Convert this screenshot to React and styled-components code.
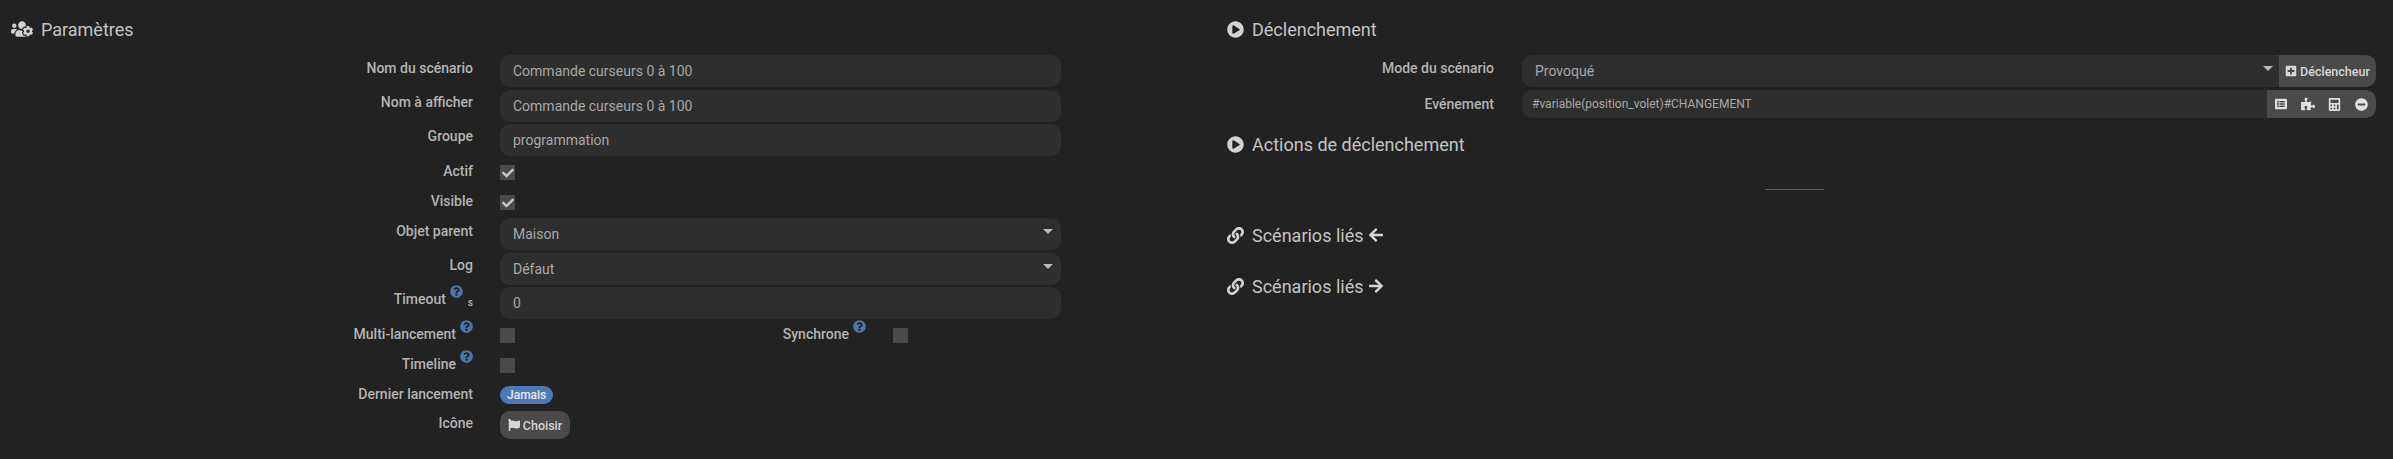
import styled, { createGlobalStyle } from "styled-components";
import {
  FaUsersCog,
  FaPlayCircle,
  FaLink,
  FaArrowLeft,
  FaArrowRight,
  FaPlusSquare,
  FaFlag,
  FaQuestionCircle,
  FaListAlt,
  FaPuzzlePiece,
  FaCalculator,
  FaMinusCircle,
  FaCheck,
} from "react-icons/fa";

const GlobalStyle = createGlobalStyle`
  html, body {
    margin: 0;
    background: #222222;
    height: 100%;
  }
  body {
    font-family: Roboto, "Liberation Sans", sans-serif;
    color: #b8b8b8;
    overflow: hidden;
  }
  * { box-sizing: border-box; }
`;

const Page = styled.div`
  width: 2393px;
  height: 459px;
  display: grid;
  grid-template-columns: 1227px 1166px;
  background: #222222;
`;

const LeftPanel = styled.section`
  padding: 18px 0 0 11px;
`;

const RightPanel = styled.section`
  padding-top: 18px;
`;

const Title = styled.h3`
  margin: 0;
  height: 22px;
  display: flex;
  align-items: center;
  gap: ${(p) => p.$gap || 8}px;
  font-size: 18px;
  font-weight: 400;
  color: #c4c4c4;
  margin-top: ${(p) => p.$top || 0}px;
  svg {
    flex: none;
    color: #d2d2d2;
  }
`;

const TitleArrow = styled.span`
  display: inline-flex;
  margin-left: -3px;
  svg {
    color: #d8d8d8;
  }
`;

const Form = styled.div`
  display: flex;
  flex-direction: column;
  margin-top: 14px;
`;

const Row = styled.div`
  display: grid;
  grid-template-columns: ${(p) => (p.$right ? "267px 854px" : "462px 561px")};
  column-gap: ${(p) => (p.$right ? 28 : 27)}px;
  align-items: center;
  height: ${(p) => p.$height || 34.4}px;
`;

const Label = styled.label`
  display: flex;
  justify-content: flex-end;
  align-items: flex-start;
  font-size: 14px;
  font-weight: 500;
  line-height: 16px;
  color: #b4b4b4;
  padding-bottom: ${(p) => p.$lift ?? 7}px;
  white-space: nowrap;
`;

const Help = styled(FaQuestionCircle)`
  color: #4a77ad;
  font-size: 13px;
  margin: -6px 0 0 4px;
`;

const Unit = styled.span`
  font-size: 10px;
  margin: 6px 0 0 5px;
  line-height: 12px;
`;

const fieldStyles = `
  width: 100%;
  height: 32px;
  border: 0;
  outline: 0;
  background: #2e2e2e;
  color: #a8a8a8;
  font-family: Roboto, "Liberation Sans", sans-serif;
  font-size: 14px;
  padding: 0 13px;
  display: block;
`;

const Input = styled.input`
  ${fieldStyles}
  border-radius: 10px;
`;

const SelectWrap = styled.div`
  position: relative;
  flex: 1;
  min-width: 0;
`;

const Select = styled.select`
  ${fieldStyles}
  appearance: none;
  border-radius: ${(p) => (p.$joined ? "10px 0 0 10px" : "10px")};
`;

const Caret = styled.span`
  position: absolute;
  top: 11px;
  right: ${(p) => (p.$joined ? 6 : 8)}px;
  border-left: 5px solid transparent;
  border-right: 5px solid transparent;
  border-top: 5px solid #b8b8b8;
`;

const Check = styled.span`
  width: 15px;
  height: 15px;
  background: #4a4a4a;
  display: flex;
  align-items: center;
  justify-content: center;
  color: #c8c8c8;
  font-size: 12px;
  margin-top: 1px;
`;

const CheckRow = styled.div`
  display: flex;
  align-items: center;
`;

const SideLabel = styled(Label)`
  width: 351px;
  padding-bottom: 2px;
`;

const SideCheck = styled(Check)`
  margin-left: 27px;
`;

const Badge = styled.span`
  display: inline-block;
  justify-self: start;
  background: #4f79b5;
  color: #e8e8e8;
  font-size: 12px;
  font-weight: 500;
  line-height: 18px;
  height: 18px;
  padding: 0 7px;
  border-radius: 9px;
`;

const ChooseButton = styled.button`
  justify-self: start;
  height: 28px;
  width: 70px;
  border: 0;
  border-radius: 10px;
  background: #4a4a4a;
  color: #d6d6d6;
  font-family: Roboto, "Liberation Sans", sans-serif;
  font-size: 12.5px;
  font-weight: 500;
  display: flex;
  align-items: center;
  justify-content: center;
  gap: 3px;
  padding: 0;
`;

const Group = styled.div`
  display: flex;
  height: ${(p) => p.$height || 32}px;
`;

const TriggerButton = styled.button`
  width: 97px;
  height: 32px;
  flex: none;
  border: 0;
  border-radius: 0 10px 10px 0;
  background: #4a4a4a;
  color: #d8d8d8;
  font-family: Roboto, "Liberation Sans", sans-serif;
  font-size: 12.5px;
  font-weight: 500;
  display: flex;
  align-items: center;
  justify-content: center;
  gap: 3px;
  padding: 0;
`;

const EventInput = styled(Input)`
  flex: 1;
  min-width: 0;
  height: 28px;
  font-size: 12px;
  padding: 0 10px;
  border-radius: 10px 0 0 10px;
`;

const Addons = styled.div`
  width: 109px;
  flex: none;
  display: flex;
  align-items: center;
  justify-content: space-between;
  padding: 0 8px;
  height: 28px;
  background: #4a4a4a;
  border-radius: 0 10px 10px 0;
  color: #e0e0e0;
  font-size: 12px;
`;

const Separator = styled.hr`
  width: 59px;
  height: 1px;
  margin: 34px 0 0 538px;
  border: 0;
  background: #5b6426;
`;

const Params = () => (
  <LeftPanel>
    <Title>
      <FaUsersCog size={22} />
      Paramètres
    </Title>
    <Form>
      <Row>
        <Label>Nom du scénario</Label>
        <Input readOnly defaultValue="Commande curseurs 0 à 100" />
      </Row>
      <Row>
        <Label>Nom à afficher</Label>
        <Input readOnly defaultValue="Commande curseurs 0 à 100" />
      </Row>
      <Row>
        <Label>Groupe</Label>
        <Input readOnly defaultValue="programmation" />
      </Row>
      <Row $height={30}>
        <Label $lift={2}>Actif</Label>
        <Check>
          <FaCheck />
        </Check>
      </Row>
      <Row $height={30}>
        <Label $lift={2}>Visible</Label>
        <Check>
          <FaCheck />
        </Check>
      </Row>
      <Row>
        <Label>Objet parent</Label>
        <SelectWrap>
          <Select>
            <option>Maison</option>
          </Select>
          <Caret />
        </SelectWrap>
      </Row>
      <Row>
        <Label>Log</Label>
        <SelectWrap>
          <Select>
            <option>Défaut</option>
          </Select>
          <Caret />
        </SelectWrap>
      </Row>
      <Row>
        <Label>
          Timeout
          <Help />
          <Unit>s</Unit>
        </Label>
        <Input readOnly defaultValue="0" />
      </Row>
      <Row $height={30}>
        <Label $lift={2}>
          Multi-lancement
          <Help />
        </Label>
        <CheckRow>
          <Check />
          <SideLabel>
            Synchrone
            <Help />
          </SideLabel>
          <SideCheck />
        </CheckRow>
      </Row>
      <Row $height={30}>
        <Label $lift={2}>
          Timeline
          <Help />
        </Label>
        <Check />
      </Row>
      <Row $height={30}>
        <Label $lift={2}>Dernier lancement</Label>
        <Badge>Jamais</Badge>
      </Row>
      <Row $height={30}>
        <Label $lift={4}>Icône</Label>
        <ChooseButton>
          <FaFlag size={12} />
          Choisir
        </ChooseButton>
      </Row>
    </Form>
  </LeftPanel>
);

const Triggers = () => (
  <RightPanel>
    <Title>
      <FaPlayCircle size={17} />
      Déclenchement
    </Title>
    <Form>
      <Row $right>
        <Label>Mode du scénario</Label>
        <Group>
          <SelectWrap>
            <Select $joined>
              <option>Provoqué</option>
            </Select>
            <Caret $joined />
          </SelectWrap>
          <TriggerButton>
            <FaPlusSquare size={12} />
            Déclencheur
          </TriggerButton>
        </Group>
      </Row>
      <Row $right $height={32}>
        <Label $lift={0}>Evénement</Label>
        <Group $height={28}>
          <EventInput readOnly defaultValue="#variable(position_volet)#CHANGEMENT" />
          <Addons>
            <FaListAlt size={12} />
            <FaPuzzlePiece size={14} />
            <FaCalculator size={13} />
            <FaMinusCircle size={13} />
          </Addons>
        </Group>
      </Row>
    </Form>
    <Title $top={13}>
      <FaPlayCircle size={17} />
      Actions de déclenchement
    </Title>
    <Separator />
    <Title $top={34}>
      <FaLink size={17} />
      Scénarios liés
      <TitleArrow>
        <FaArrowLeft size={16} />
      </TitleArrow>
    </Title>
    <Title $top={29}>
      <FaLink size={17} />
      Scénarios liés
      <TitleArrow>
        <FaArrowRight size={16} />
      </TitleArrow>
    </Title>
  </RightPanel>
);

export default function App() {
  return (
    <>
      <GlobalStyle />
      <Page>
        <Params />
        <Triggers />
      </Page>
    </>
  );
}
